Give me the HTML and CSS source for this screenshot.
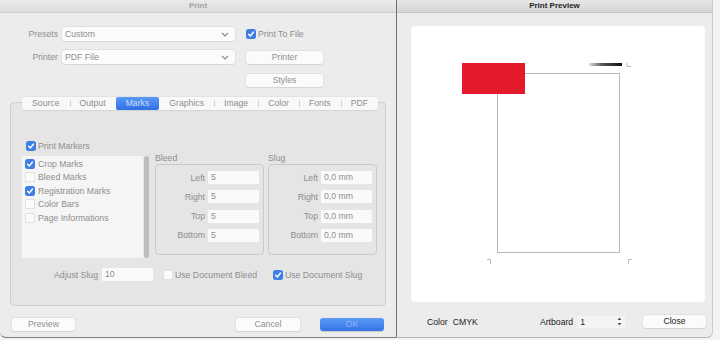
FILE: index.html
```html
<!DOCTYPE html>
<html lang="en">
<head>
  <meta charset="UTF-8">
  <title>Print</title>
  <link rel="stylesheet" href="styles.css">
</head>
<body>

<div class="desk">

  <!-- Print dialog -->
  <section class="win win-print">
    <div class="titlebar">Print</div>

    <div class="print-top">
      <div class="form-row">
        <span class="lbl">Presets</span>
        <div class="select"><span>Custom</span><svg width="8" height="5" viewBox="0 0 8 5"><path d="M1 1l3 3 3-3" stroke="#8a8a8a" stroke-width="1.1" fill="none"/></svg></div>
        <label class="check"><span class="box on"><svg viewBox="0 0 10 10"><path d="M2.6 5.2l1.7 1.8 3.2-4" stroke="#fff" stroke-width="1.4" fill="none" stroke-linecap="round" stroke-linejoin="round"/></svg></span>Print To File</label>
      </div>
      <div class="form-row">
        <span class="lbl">Printer</span>
        <div class="select"><span>PDF File</span><svg width="8" height="5" viewBox="0 0 8 5"><path d="M1 1l3 3 3-3" stroke="#8a8a8a" stroke-width="1.1" fill="none"/></svg></div>
        <div class="btn wide">Printer</div>
      </div>
      <div class="form-row">
        <span class="spacer"></span>
        <div class="btn wide">Styles</div>
      </div>
    </div>

    <div class="tabs">
      <div class="tab">Source</div>
      <div class="tab">Output</div>
      <div class="tab active">Marks</div>
      <div class="tab">Graphics</div>
      <div class="tab">Image</div>
      <div class="tab">Color</div>
      <div class="tab">Fonts</div>
      <div class="tab">PDF</div>
    </div>

    <div class="group">
      <label class="check markers"><span class="box on"><svg viewBox="0 0 10 10"><path d="M2.6 5.2l1.7 1.8 3.2-4" stroke="#fff" stroke-width="1.4" fill="none" stroke-linecap="round" stroke-linejoin="round"/></svg></span>Print Markers</label>

      <div class="marks-row">
        <div class="list">
          <ul>
            <li><span class="box on"><svg viewBox="0 0 10 10"><path d="M2.6 5.2l1.7 1.8 3.2-4" stroke="#fff" stroke-width="1.4" fill="none" stroke-linecap="round" stroke-linejoin="round"/></svg></span>Crop Marks</li>
            <li><span class="box"></span>Bleed Marks</li>
            <li><span class="box on"><svg viewBox="0 0 10 10"><path d="M2.6 5.2l1.7 1.8 3.2-4" stroke="#fff" stroke-width="1.4" fill="none" stroke-linecap="round" stroke-linejoin="round"/></svg></span>Registration Marks</li>
            <li><span class="box"></span>Color Bars</li>
            <li><span class="box"></span>Page Informations</li>
          </ul>
          <div class="scroll"><div class="thumb"></div></div>
        </div>

        <div class="fs">
          <div class="fs-cap">Bleed</div>
          <div class="fs-box">
            <div class="fld"><span>Left</span><div class="inp">5</div></div>
            <div class="fld"><span>Right</span><div class="inp">5</div></div>
            <div class="fld"><span>Top</span><div class="inp">5</div></div>
            <div class="fld"><span>Bottom</span><div class="inp">5</div></div>
          </div>
        </div>

        <div class="fs">
          <div class="fs-cap">Slug</div>
          <div class="fs-box">
            <div class="fld"><span>Left</span><div class="inp">0,0 mm</div></div>
            <div class="fld"><span>Right</span><div class="inp">0,0 mm</div></div>
            <div class="fld"><span>Top</span><div class="inp">0,0 mm</div></div>
            <div class="fld"><span>Bottom</span><div class="inp">0,0 mm</div></div>
          </div>
        </div>
      </div>

      <div class="adjust-row">
        <span class="adj-lbl">Adjust Slug</span>
        <div class="inp">10</div>
        <label class="check opt"><span class="box"></span>Use Document Bleed</label>
        <label class="check"><span class="box on"><svg viewBox="0 0 10 10"><path d="M2.6 5.2l1.7 1.8 3.2-4" stroke="#fff" stroke-width="1.4" fill="none" stroke-linecap="round" stroke-linejoin="round"/></svg></span>Use Document Slug</label>
      </div>
    </div>

    <div class="footer">
      <div class="btn">Preview</div>
      <div class="btn cancel">Cancel</div>
      <div class="btn ok">OK</div>
    </div>
  </section>

  <!-- Preview window -->
  <section class="win win-preview">
    <div class="titlebar active">Print Preview</div>

    <div class="canvas">
      <div class="page"></div>
      <div class="red"></div>
      <div class="colorbar"></div>
      <svg class="mark m1" width="6" height="5" viewBox="0 0 6 5"><path d="M1 0v3.5h4" stroke="#b9b9b9" fill="none"/></svg>
      <svg class="mark m2" width="6" height="5" viewBox="0 0 6 5"><path d="M0 0.5h3.5v4" stroke="#b9b9b9" fill="none"/></svg>
      <svg class="mark m3" width="6" height="5" viewBox="0 0 6 5"><path d="M5 0.5h-3.5v4" stroke="#b9b9b9" fill="none"/></svg>
    </div>

    <div class="preview-foot">
      <span>Color</span>
      <span class="cmyk">CMYK</span>
      <span class="artboard">Artboard</span>
      <div class="stepper"><span>1</span><svg width="5" height="9" viewBox="0 0 5 9"><path d="M2.5 0.5l2 2.5h-4z M2.5 8.5l2-2.5h-4z" fill="#555"/></svg></div>
      <div class="btn close">Close</div>
    </div>
  </section>

</div>

</body>
</html>
```

FILE: styles.css
```css
body {
  margin: 0;
  width: 720px;
  height: 340px;
  overflow: hidden;
  background: #f3f3f3;
  font-family: "Liberation Sans", Arial, sans-serif;
  font-size: 8.7px;
  color: #8e8e8e;
}
.desk {
  display: flex;
  height: 340px;
}
.win {
  height: 338px;
  background: #ececec;
  box-sizing: border-box;
}
.win-print {
  width: 396px;
  border-bottom-left-radius: 6px;
  border-bottom: 1px solid #7a7a7a;
}
.win-preview {
  width: 317px;
  border-left: 1px solid #6f6f6f;
  border-right: 1px solid #cdcdcd;
  border-bottom: 1px solid #b8b8b8;
  border-bottom-right-radius: 6px;
  color: #222;
}
.titlebar {
  height: 13px;
  box-sizing: border-box;
  line-height: 12px;
  text-align: center;
  font-size: 8px;
  font-weight: bold;
  color: #a2a2a2;
  background: linear-gradient(#ebebeb, #dcdcdc);
  border-bottom: 1px solid #cdcdcd;
}
.titlebar.active {
  color: #262626;
  background: linear-gradient(#e6e6e6, #d5d5d5);
  border-bottom-color: #c2c2c2;
}

/* top form */
.print-top {
  padding-top: 14px;
  display: flex;
  flex-direction: column;
  gap: 9px;
}
.form-row {
  display: flex;
  align-items: center;
  height: 14px;
}
.lbl {
  width: 58px;
  margin-right: 4px;
  text-align: right;
}
.spacer {
  width: 246px;
}
.select {
  width: 173px;
  height: 14px;
  box-sizing: border-box;
  margin-right: 11px;
  padding: 0 3px 0 3px;
  display: flex;
  align-items: center;
  justify-content: space-between;
  background: #fbfbfb;
  border-radius: 3px;
  box-shadow: 0 0 0 0.5px #d6d6d6, 0 0.5px 1px rgba(0, 0, 0, 0.08);
}
.select svg {
  margin-right: 3px;
}
.check {
  display: flex;
  align-items: center;
  gap: 2px;
}
.box {
  width: 10px;
  height: 10px;
  flex: none;
  border-radius: 2.5px;
  background: #fbfbfb;
  box-shadow: inset 0 0 0 0.5px #cdcdcd;
}
.box.on {
  background: #3f7fe4;
  box-shadow: none;
}
.box svg {
  display: block;
  width: 10px;
  height: 10px;
}
.btn {
  height: 13px;
  line-height: 13px;
  text-align: center;
  background: #fbfbfb;
  border-radius: 3px;
  box-shadow: 0 0 0 0.5px #dadada, 0 0.5px 1px rgba(0, 0, 0, 0.12);
}
.btn.wide {
  width: 77px;
}

/* tabs */
.tabs {
  display: flex;
  width: max-content;
  height: 13px;
  margin: 10px 0 0 22px;
  position: relative;
  z-index: 1;
  background: #f8f8f8;
  border-radius: 3px;
  box-shadow: 0 0 0 0.5px #dcdcdc, 0 0.5px 1px rgba(0, 0, 0, 0.1);
}
.tab {
  padding: 0 10px;
  line-height: 13px;
  position: relative;
}
.tab + .tab::before {
  content: "";
  position: absolute;
  left: 0;
  top: 3px;
  height: 7px;
  border-left: 1px solid #d3d3d3;
}
.tab.active {
  color: #c9dcfb;
  background: linear-gradient(#5c9bf7, #2e6ee2);
  border-radius: 2px;
}
.tab.active::before,
.tab.active + .tab::before {
  display: none;
}

/* marks group */
.group {
  height: 204px;
  box-sizing: border-box;
  margin: -8px 10px 0 10px;
  padding: 38px 0 0 11px;
  background: #e5e5e5;
  border: 1px solid #cdcdcd;
  border-radius: 4px;
}
.markers {
  margin-left: 4px;
  height: 10px;
}
.marks-row {
  display: flex;
  align-items: flex-start;
  margin-top: 5px;
}
.list {
  display: flex;
  width: 127px;
  height: 102px;
  margin-right: 6px;
}
.list ul {
  flex: 1;
  margin: 0;
  padding: 1px 0 0 3px;
  list-style: none;
  background: #f5f5f5;
}
.list li {
  height: 13.5px;
  display: flex;
  align-items: center;
  gap: 3px;
}
.scroll {
  width: 6px;
  background: #e9e9e9;
  display: flex;
  justify-content: center;
}
.thumb {
  width: 5px;
  background: #bdbdbd;
  border-radius: 3px;
}
.fs {
  width: 109px;
  margin-right: 4px;
}
.fs-cap {
  line-height: 8px;
  margin: -2px 0 2px 0;
}
.fs-box {
  height: 91px;
  box-sizing: border-box;
  padding: 6px 4px 0 0;
  display: flex;
  flex-direction: column;
  gap: 6.3px;
  border: 1px solid #cacaca;
  border-radius: 4px;
}
.fld {
  height: 13px;
  display: flex;
  align-items: center;
  justify-content: flex-end;
  gap: 3px;
}
.inp {
  width: 51px;
  height: 13px;
  box-sizing: border-box;
  padding-left: 3px;
  line-height: 13px;
  background: #fafafa;
}
.adjust-row {
  display: flex;
  align-items: center;
  height: 13px;
  margin-top: 10px;
}
.adj-lbl {
  width: 76px;
  margin-right: 4px;
  text-align: right;
}
.adjust-row .inp {
  margin-right: 10px;
}
.opt {
  width: 110px;
}

/* footer */
.footer {
  display: flex;
  margin-top: 12px;
  padding: 0 12px;
}
.footer .btn {
  width: 63px;
}
.footer .cancel {
  width: 64px;
  margin-left: auto;
}
.footer .ok {
  width: 64px;
  margin-left: 20px;
  color: #8fb6f3;
  background: linear-gradient(#5c9bf7, #3374e6);
  box-shadow: 0 0.5px 1px rgba(0, 0, 0, 0.15);
}

/* preview window */
.canvas {
  width: 294px;
  height: 276px;
  margin: 13px 0 0 14px;
  position: relative;
  background: #fff;
  border-radius: 3px;
}
.page {
  position: absolute;
  left: 86px;
  top: 47px;
  width: 123px;
  height: 180px;
  box-sizing: border-box;
  border: 1px solid #b7b7bd;
}
.red {
  position: absolute;
  left: 51px;
  top: 37px;
  width: 63px;
  height: 31px;
  background: #e21a2c;
}
.colorbar {
  position: absolute;
  left: 178px;
  top: 37px;
  width: 33px;
  height: 3px;
  background: linear-gradient(to right, #e0e0e0, #555 40%, #111);
}
.mark {
  position: absolute;
}
.m1 {
  left: 215px;
  top: 37px;
}
.m2 {
  left: 76px;
  top: 233px;
}
.m3 {
  left: 216px;
  top: 233px;
}
.preview-foot {
  display: flex;
  align-items: center;
  height: 13px;
  margin-top: 13px;
  padding: 0 6px 0 30px;
}
.cmyk {
  margin-left: 5px;
}
.artboard {
  margin-left: 62px;
}
.stepper {
  width: 48px;
  height: 12px;
  box-sizing: border-box;
  margin-left: 4px;
  padding: 0 3px;
  display: flex;
  align-items: center;
  justify-content: space-between;
  background: #f4f4f4;
}
.preview-foot .close {
  width: 63px;
  margin-left: auto;
  color: #222;
}
```
